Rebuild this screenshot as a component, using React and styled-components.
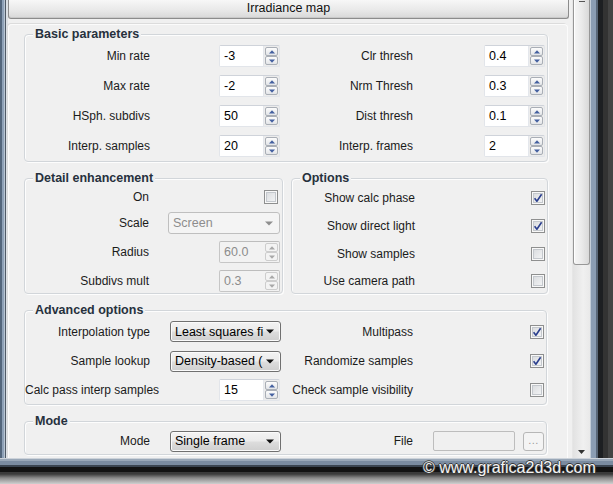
import React from "react";
import styled, { createGlobalStyle } from "styled-components";

const GlobalStyle = createGlobalStyle`
  html, body {
    margin: 0;
    padding: 0;
    background: #d6d6d6;
  }
  body {
    font-family: "Liberation Sans", Arial, sans-serif;
    font-size: 12px;
    color: #1b1b1b;
  }
`;

const Screen = styled.div`
  position: relative;
  width: 613px;
  height: 484px;
  overflow: hidden;
  display: flex;
  flex-direction: column;
`;

const WindowRow = styled.div`
  display: flex;
  height: 458px;
`;

const LeftFrame = styled.div`
  width: 8px;
  flex: none;
  background: linear-gradient(
    to right,
    #53667c 0 2px,
    #8ea1b7 2px 4px,
    #b8c5d3 4px 5px,
    #4f5965 5px 6px,
    #dde1e5 6px 8px
  );
`;

const Panel = styled.div`
  width: 564px;
  flex: none;
  display: flex;
  flex-direction: column;
  background: #f0f0f0;
`;

const Header = styled.div`
  height: 19px;
  box-sizing: border-box;
  margin-right: 3px;
  border: 1px solid #8c8c8c;
  border-top: none;
  border-radius: 0 0 3px 3px;
  background: linear-gradient(#f7f7f7, #e9e9e9 55%, #d8d8d8);
  box-shadow: inset 0 -1px 0 #c9c9c9;
  text-align: center;
  font-size: 12.5px;
  line-height: 17px;
  color: #111;
`;

const Body = styled.div`
  flex: 1;
  margin: 5px 4px 0 0;
  box-sizing: border-box;
  border: 1px solid #fbfbfb;
  border-bottom: none;
  border-radius: 4px 4px 0 0;
  box-shadow: -1px -1px 0 #dcdcdc;
  padding: 9px 19px 0 15px;
  display: flex;
  flex-direction: column;
  gap: 16px;
  overflow: hidden;
`;

const Group = styled.div`
  position: relative;
  box-sizing: border-box;
  width: ${(p) => p.$w ?? 524}px;
  flex: none;
  border: 1px solid #d2d6da;
  border-radius: 4px;
  box-shadow: inset 1px 1px 0 #fdfdfd, 1px 1px 0 #fdfdfd;
  padding-top: ${(p) => p.$pt}px;
`;

const GroupTitle = styled.span`
  position: absolute;
  top: -9px;
  left: 8px;
  padding: 0 2px;
  background: #f0f0f0;
  font-weight: bold;
  font-size: 12.5px;
  line-height: 16px;
  color: #27313d;
`;

const GroupPair = styled.div`
  display: flex;
  gap: 8px;
`;

const Line = styled.div`
  display: grid;
  grid-template-columns: 256px 1fr;
  height: ${(p) => p.$h}px;
  align-items: center;
`;

const Field = styled.div`
  display: flex;
  align-items: center;
  height: ${(p) => (p.$h ? `${p.$h}px` : "100%")};
  padding-right: ${(p) => p.$pr ?? 1}px;
`;

const Label = styled.span`
  flex: none;
  width: ${(p) => p.$w}px;
  text-align: right;
  white-space: nowrap;
  color: #1b1b1b;
`;

const Slot = styled.div`
  flex: 1;
  display: flex;
  justify-content: flex-end;
  align-items: center;
  gap: 8px;
`;

/* spinner */
const SpinBox = styled.div`
  display: flex;
  box-sizing: border-box;
  width: 61px;
  height: 22px;
  border: 1px solid ${(p) => (p.$off ? "#c6c6c6" : "#e2e5ea")};
  border-top-color: ${(p) => (p.$off ? "#bdbdbd" : "#cfd3da")};
  border-radius: 2px;
  background: ${(p) => (p.$off ? "#f2f2f2" : "#ececec")};
`;

const SpinField = styled.div`
  flex: 1;
  padding-left: 4px;
  font-size: 12.5px;
  line-height: 20px;
  color: ${(p) => (p.$off ? "#8c8c8c" : "#000")};
  background: ${(p) => (p.$off ? "transparent" : "#fff")};
  border-right: ${(p) => (p.$off ? "none" : "1px solid #e4e7ec")};
`;

const SpinButtons = styled.div`
  width: 15px;
  display: flex;
  flex-direction: column;
  padding: 1px 1px 1px 1px;
  box-sizing: border-box;
`;

const SpinHalf = styled.div`
  flex: 1;
  display: flex;
  align-items: center;
  justify-content: center;
  border: 1px solid ${(p) => (p.$off ? "#cdcdcd" : "#a9aeb6")};
  border-radius: 2px;
  background: ${(p) =>
    p.$off ? "#f3f3f3" : "linear-gradient(#fcfcfc, #e3e5e8)"};
`;

const Tri = ({ up, color }) => (
  <svg width="6" height="4" viewBox="0 0 6 4">
    <path d={up ? "M0 3.5L3 0.3 6 3.5z" : "M0 0.5h6L3 3.7z"} fill={color} />
  </svg>
);

const Spinner = ({ value, off }) => {
  const c = off ? "#a8a8a8" : "#4460a0";
  return (
    <SpinBox $off={off}>
      <SpinField $off={off}>{value}</SpinField>
      <SpinButtons>
        <SpinHalf $off={off}>
          <Tri up color={c} />
        </SpinHalf>
        <SpinHalf $off={off}>
          <Tri color={c} />
        </SpinHalf>
      </SpinButtons>
    </SpinBox>
  );
};

/* checkbox */
const Box = styled.span`
  display: flex;
  align-items: center;
  justify-content: center;
  box-sizing: border-box;
  width: 14px;
  height: 14px;
  margin-right: 1px;
  border: 1px solid #8e8f8f;
  background: linear-gradient(135deg, #d6d8db, #f7f8f9);
  box-shadow: inset 0 0 0 1px #f8f8f8, inset 0 0 0 2px #c4c8cd;
`;

const CheckBox = ({ on }) => (
  <Box>
    {on && (
      <svg width="10" height="10" viewBox="0 0 10 10">
        <path
          d="M1.6 5.2L3.9 8.2L8.6 1.2"
          fill="none"
          stroke="#2b3f8e"
          strokeWidth="1.6"
          strokeLinejoin="round"
        />
      </svg>
    )}
  </Box>
);

/* combo */
const ComboBox = styled.div`
  display: flex;
  align-items: center;
  box-sizing: border-box;
  width: ${(p) => p.$w ?? 111}px;
  height: ${(p) => p.$h ?? 21}px;
  padding: 0 6px 0 4px;
  border: 1px solid ${(p) => (p.$off ? "#bfbfbf" : "#707070")};
  border-radius: 3px;
  background: ${(p) =>
    p.$off
      ? "#f4f4f4"
      : "linear-gradient(#f3f3f3 0%, #ebebeb 48%, #dddddd 52%, #cfcfcf 100%)"};
  box-shadow: ${(p) => (p.$off ? "none" : "inset 0 0 0 1px #fbfbfb")};
  font-size: 12.5px;
  color: ${(p) => (p.$off ? "#8d8d8d" : "#000")};
`;

const ComboText = styled.span`
  flex: 1;
  white-space: nowrap;
  overflow: hidden;
`;

const Combo = ({ text, off, w, h }) => (
  <ComboBox $off={off} $w={w} $h={h}>
    <ComboText>{text}</ComboText>
    <svg width="8" height="5" viewBox="0 0 8 5">
      <path d="M0 0.5h8L4 4.6z" fill={off ? "#8e8e8e" : "#111"} />
    </svg>
  </ComboBox>
);

const FileBox = styled.div`
  box-sizing: border-box;
  width: 82px;
  height: 20px;
  border: 1px solid #bdbdbd;
  border-radius: 2px;
  background: #f0f0f0;
`;

const DotsButton = styled.div`
  box-sizing: border-box;
  width: 21px;
  height: 19px;
  border: 1px solid #b7b7b7;
  border-radius: 3px;
  background: #f4f4f4;
  color: #9a9a9a;
  font-size: 11px;
  line-height: 15px;
  text-align: center;
  letter-spacing: 0.5px;
`;

/* scrollbar + frame */
const ScrollBar = styled.div`
  width: 18px;
  flex: none;
  display: flex;
  flex-direction: column;
  background: linear-gradient(to right, #e2e2e2, #f0f0f0 60%, #e9e9e9);
  border-left: 1px solid #e6e6e6;
  box-sizing: border-box;
`;

const Thumb = styled.div`
  position: relative;
  height: 265px;
  box-sizing: border-box;
  border: 1px solid #979797;
  border-top: none;
  border-radius: 0 0 3px 3px;
  background: linear-gradient(to right, #f6f6f6, #ebebeb 50%, #d9d9d9);
  box-shadow: inset 1px 0 0 #fff;

  &::before {
    content: "";
    position: absolute;
    top: 1px;
    left: 5px;
    width: 6px;
    height: 1px;
    background: #555;
  }
`;

const Track = styled.div`
  flex: 1;
  display: flex;
  align-items: flex-end;
  justify-content: center;
  padding-bottom: 4px;
`;

const RightFrame = styled.div`
  flex: 1;
  background: linear-gradient(
    to right,
    #c4ced9 0 1px,
    #8b9db3 1px 6px,
    #5a6879 6px 8px,
    #1d1f22 8px 13px,
    #333 13px 18px,
    #444 18px
  );
`;

const BottomFrame = styled.div`
  height: 26px;
  background: linear-gradient(
    #cdd3da 0 1px,
    #99a7b7 1px 3px,
    #7a8ba0 3px 7px,
    #3a4450 7px 9px,
    #121212 9px 14px,
    #3a3a3a 14px 16px,
    #8a8a8a 20px,
    #d0d0d0 26px
  );
`;

const Watermark = styled.div`
  position: absolute;
  left: 423px;
  top: 459px;
  font-family: "Liberation Sans", Arial, sans-serif;
  font-size: 16px;
  line-height: 18px;
  color: #f4f4f4;
  text-shadow: 1px 0 0 #3a3a3a, -1px 0 0 #3a3a3a, 0 1px 0 #3a3a3a,
    0 -1px 0 #3a3a3a;
  white-space: nowrap;
`;

export default function App() {
  return (
    <Screen>
      <GlobalStyle />
      <WindowRow>
        <LeftFrame />
        <Panel>
          <Header>Irradiance map</Header>
          <Body>
            <Group $pt={6}>
              <GroupTitle>Basic parameters</GroupTitle>
              <Line $h={30}>
                <Field>
                  <Label $w={125}>Min rate</Label>
                  <Slot><Spinner value="-3" /></Slot>
                </Field>
                <Field $pr={2}>
                  <Label $w={132}>Clr thresh</Label>
                  <Slot><Spinner value="0.4" /></Slot>
                </Field>
              </Line>
              <Line $h={30}>
                <Field>
                  <Label $w={125}>Max rate</Label>
                  <Slot><Spinner value="-2" /></Slot>
                </Field>
                <Field $pr={2}>
                  <Label $w={132}>Nrm Thresh</Label>
                  <Slot><Spinner value="0.3" /></Slot>
                </Field>
              </Line>
              <Line $h={30}>
                <Field>
                  <Label $w={125}>HSph. subdivs</Label>
                  <Slot><Spinner value="50" /></Slot>
                </Field>
                <Field $pr={2}>
                  <Label $w={132}>Dist thresh</Label>
                  <Slot><Spinner value="0.1" /></Slot>
                </Field>
              </Line>
              <Line $h={30}>
                <Field>
                  <Label $w={125}>Interp. samples</Label>
                  <Slot><Spinner value="20" /></Slot>
                </Field>
                <Field $pr={2}>
                  <Label $w={132}>Interp. frames</Label>
                  <Slot><Spinner value="2" /></Slot>
                </Field>
              </Line>
            </Group>

            <GroupPair>
              <Group $w={259} $pt={4}>
                <GroupTitle>Detail enhancement</GroupTitle>
                <Field $h={28} $pr={3}>
                  <Label $w={124}>On</Label>
                  <Slot><CheckBox /></Slot>
                </Field>
                <Field $h={24} $pr={2}>
                  <Label $w={124}>Scale</Label>
                  <Slot><Combo text="Screen" off w={112} h={22} /></Slot>
                </Field>
                <Field $h={34} $pr={2}>
                  <Label $w={124}>Radius</Label>
                  <Slot><Spinner value="60.0" off /></Slot>
                </Field>
                <Field $h={24} $pr={2}>
                  <Label $w={124}>Subdivs mult</Label>
                  <Slot><Spinner value="0.3" off /></Slot>
                </Field>
              </Group>
              <Group $w={257} $pt={5}>
                <GroupTitle>Options</GroupTitle>
                <Field $h={28} $pr={1}>
                  <Label $w={123}>Show calc phase</Label>
                  <Slot><CheckBox on /></Slot>
                </Field>
                <Field $h={28} $pr={1}>
                  <Label $w={123}>Show direct light</Label>
                  <Slot><CheckBox on /></Slot>
                </Field>
                <Field $h={28} $pr={1}>
                  <Label $w={123}>Show samples</Label>
                  <Slot><CheckBox /></Slot>
                </Field>
                <Field $h={25} $pr={1}>
                  <Label $w={123}>Use camera path</Label>
                  <Slot><CheckBox /></Slot>
                </Field>
              </Group>
            </GroupPair>

            <Group $w={523} $pt={6}>
              <GroupTitle>Advanced options</GroupTitle>
              <Line $h={29}>
                <Field $pr={0}>
                  <Label $w={125}>Interpolation type</Label>
                  <Slot><Combo text="Least squares fi" /></Slot>
                </Field>
                <Field $pr={1}>
                  <Label $w={132}>Multipass</Label>
                  <Slot><CheckBox on /></Slot>
                </Field>
              </Line>
              <Line $h={30}>
                <Field $pr={0}>
                  <Label $w={125}>Sample lookup</Label>
                  <Slot><Combo text="Density-based (" /></Slot>
                </Field>
                <Field $pr={1}>
                  <Label $w={132}>Randomize samples</Label>
                  <Slot><CheckBox on /></Slot>
                </Field>
              </Line>
              <Line $h={28}>
                <Field $pr={1}>
                  <Label $w={132}>Calc pass interp samples</Label>
                  <Slot><Spinner value="15" /></Slot>
                </Field>
                <Field $pr={1}>
                  <Label $w={132}>Check sample visibility</Label>
                  <Slot><CheckBox /></Slot>
                </Field>
              </Line>
            </Group>

            <Group $w={523} $pt={6}>
              <GroupTitle>Mode</GroupTitle>
              <Line $h={26}>
                <Field $pr={0}>
                  <Label $w={125}>Mode</Label>
                  <Slot><Combo text="Single frame" /></Slot>
                </Field>
                <Field $pr={2}>
                  <Label $w={132}>File</Label>
                  <Slot>
                    <FileBox />
                    <DotsButton>...</DotsButton>
                  </Slot>
                </Field>
              </Line>
            </Group>
          </Body>
        </Panel>
        <ScrollBar>
          <Thumb />
          <Track>
            <svg width="7" height="4" viewBox="0 0 7 4">
              <path d="M0 0h7L3.5 4z" fill="#333" />
            </svg>
          </Track>
        </ScrollBar>
        <RightFrame />
      </WindowRow>
      <BottomFrame />
      <Watermark>© www.grafica2d3d.com</Watermark>
    </Screen>
  );
}
